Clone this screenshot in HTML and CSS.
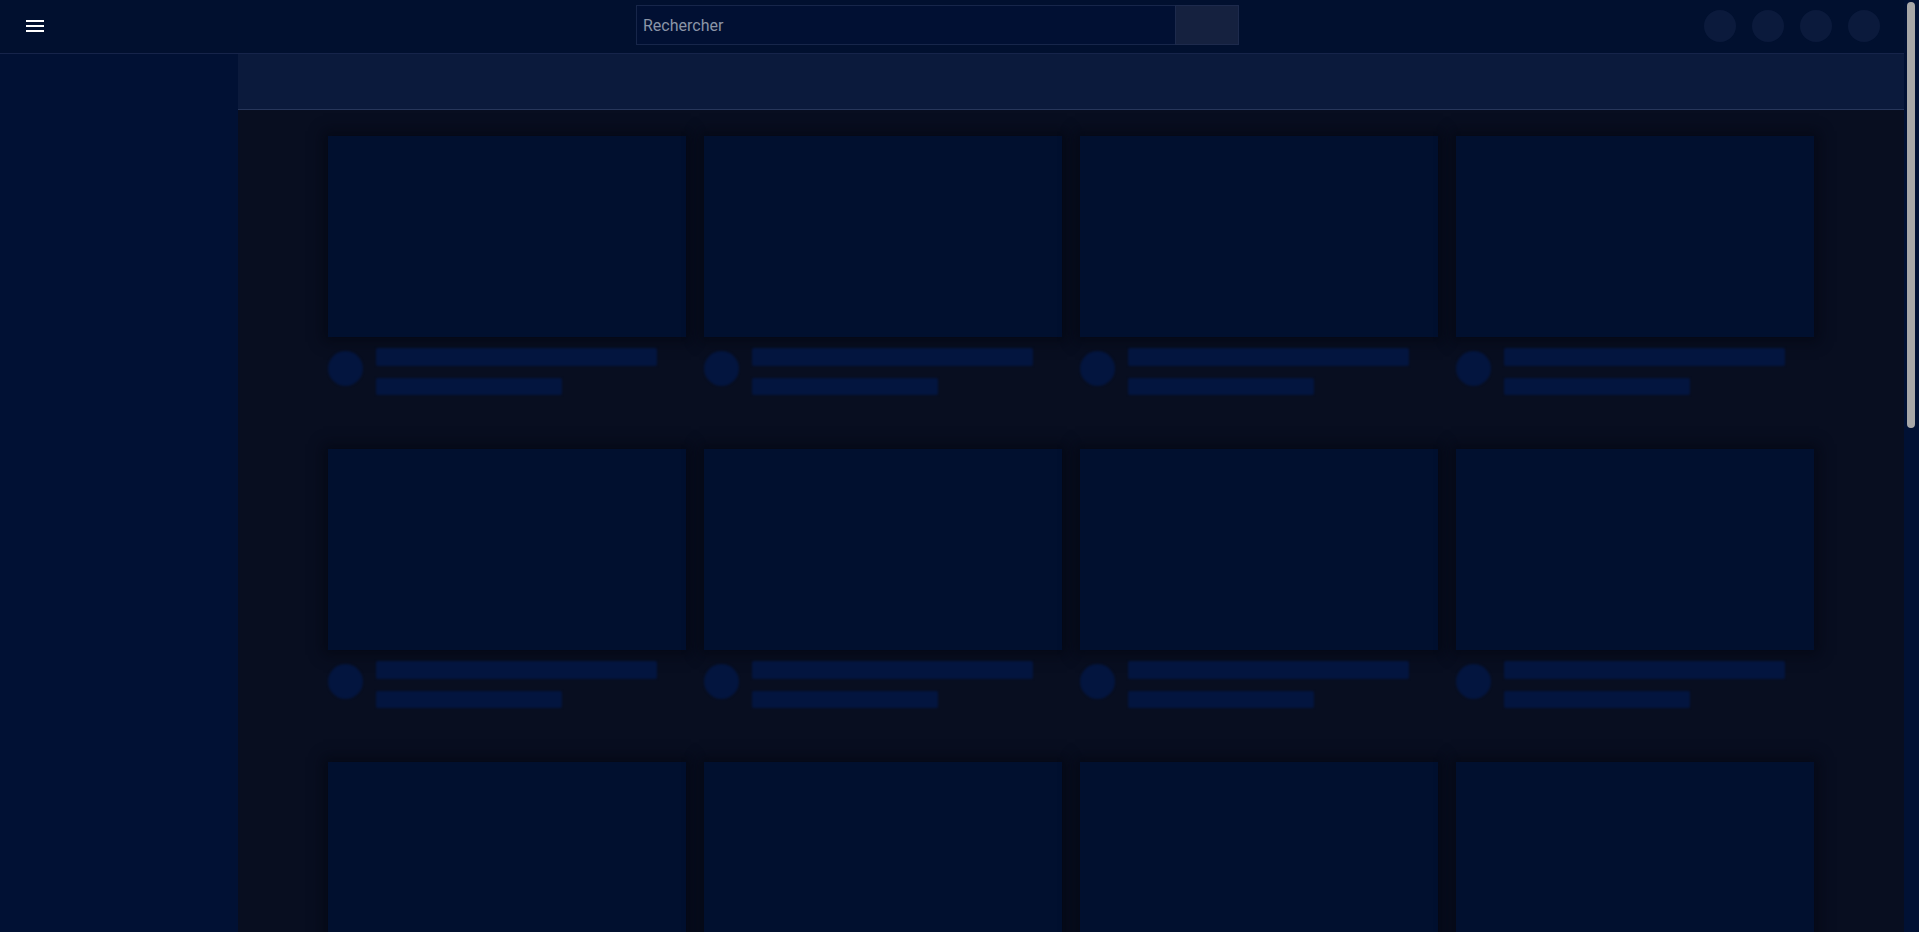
FILE: index.html
```html
<!DOCTYPE html>
<html lang="fr">
<head>
<meta charset="utf-8">
<title>Accueil</title>
<link rel="stylesheet" href="styles.css">
</head>
<body>
<div class="page">
  <div class="app">
    <header class="topbar">
      <button class="menu-btn" aria-label="Menu">
        <svg width="18" height="12" viewBox="0 0 18 12"><rect x="0" y="0" width="18" height="2" fill="#fff"/><rect x="0" y="5" width="18" height="2" fill="#fff"/><rect x="0" y="10" width="18" height="2" fill="#fff"/></svg>
      </button>
      <form class="search">
        <input class="search-input" type="text" placeholder="Rechercher">
        <button class="search-btn" type="button" aria-label="Rechercher"></button>
      </form>
      <div class="actions">
        <span class="dot"></span><span class="dot"></span><span class="dot"></span><span class="dot"></span>
      </div>
    </header>
    <div class="body-row">
      <aside class="sidebar"></aside>
      <main class="main">
        <div class="chips"></div>
        <div class="content">
          <div class="grid">
            <div class="item"><div class="thumb"></div><div class="meta"><span class="avatar"></span><div class="lines"><span class="line l1"></span><span class="line l2"></span></div></div></div>
            <div class="item"><div class="thumb"></div><div class="meta"><span class="avatar"></span><div class="lines"><span class="line l1"></span><span class="line l2"></span></div></div></div>
            <div class="item"><div class="thumb"></div><div class="meta"><span class="avatar"></span><div class="lines"><span class="line l1"></span><span class="line l2"></span></div></div></div>
            <div class="item"><div class="thumb"></div><div class="meta"><span class="avatar"></span><div class="lines"><span class="line l1"></span><span class="line l2"></span></div></div></div>
            <div class="item"><div class="thumb"></div><div class="meta"><span class="avatar"></span><div class="lines"><span class="line l1"></span><span class="line l2"></span></div></div></div>
            <div class="item"><div class="thumb"></div><div class="meta"><span class="avatar"></span><div class="lines"><span class="line l1"></span><span class="line l2"></span></div></div></div>
            <div class="item"><div class="thumb"></div><div class="meta"><span class="avatar"></span><div class="lines"><span class="line l1"></span><span class="line l2"></span></div></div></div>
            <div class="item"><div class="thumb"></div><div class="meta"><span class="avatar"></span><div class="lines"><span class="line l1"></span><span class="line l2"></span></div></div></div>
            <div class="item"><div class="thumb"></div><div class="meta"><span class="avatar"></span><div class="lines"><span class="line l1"></span><span class="line l2"></span></div></div></div>
            <div class="item"><div class="thumb"></div><div class="meta"><span class="avatar"></span><div class="lines"><span class="line l1"></span><span class="line l2"></span></div></div></div>
            <div class="item"><div class="thumb"></div><div class="meta"><span class="avatar"></span><div class="lines"><span class="line l1"></span><span class="line l2"></span></div></div></div>
            <div class="item"><div class="thumb"></div><div class="meta"><span class="avatar"></span><div class="lines"><span class="line l1"></span><span class="line l2"></span></div></div></div>
          </div>
        </div>
      </main>
    </div>
  </div>
  <div class="scrolltrack"><div class="scrollthumb"></div></div>
</div>
</body>
</html>
```
FILE: styles.css
```css
* { box-sizing: border-box; }
html, body { margin: 0; padding: 0; height: 100%; }
body {
  background: #01102f;
  font-family: Roboto, "Liberation Sans", sans-serif;
  overflow: hidden;
}
.page {
  display: flex;
  height: 932px;
}
.app {
  flex: 1;
  display: flex;
  flex-direction: column;
  min-width: 0;
}
.topbar {
  height: 54px;
  flex: none;
  background: #01102f;
  border-bottom: 1px solid #16244a;
  display: flex;
  align-items: center;
  position: relative;
  padding: 0 0 1px 26px;
}
.menu-btn {
  background: none;
  border: 0;
  padding: 0;
  width: 18px;
  height: 12px;
  display: flex;
}
.search {
  position: absolute;
  left: 636px;
  top: 5px;
  display: flex;
  height: 40px;
}
.search-input {
  width: 539px;
  height: 40px;
  background: #011033;
  border: 1px solid #17264a;
  border-right: 0;
  color: #c0c8d6;
  font-family: Roboto, "Liberation Sans", sans-serif;
  font-size: 16px;
  padding: 0 6px;
  outline: none;
}
.search-input::placeholder { color: #8b95a7; }
.search-btn {
  width: 64px;
  height: 40px;
  background: #15213f;
  border: 1px solid #1d2a4c;
  padding: 0;
}
.actions {
  margin-left: auto;
  display: flex;
  gap: 16px;
  padding-right: 24px;
}
.dot {
  width: 32px;
  height: 32px;
  border-radius: 50%;
  background: #0b1a3c;
}
.body-row {
  flex: 1;
  display: flex;
  min-height: 0;
}
.sidebar {
  width: 238px;
  flex: none;
  background: #011134;
}
.main {
  flex: 1;
  display: flex;
  flex-direction: column;
  background: #080e20;
  min-width: 0;
}
.chips {
  height: 56px;
  flex: none;
  background: #0b1a3c;
  border-bottom: 1px solid #27365a;
}
.content {
  flex: 1;
  padding-top: 26px;
  display: flex;
  justify-content: center;
  overflow: hidden;
}
.grid {
  display: grid;
  grid-template-columns: repeat(4, 358px);
  column-gap: 18px;
  row-gap: 54px;
  align-content: start;
}
.thumb {
  height: 201px;
  background: #01102f;
  box-shadow: 0 0 12px 5px rgba(4, 7, 18, 0.7);
}
.meta {
  display: flex;
  gap: 13px;
  padding-top: 11px;
}
.avatar {
  width: 35px;
  height: 35px;
  border-radius: 50%;
  background: #03153f;
  margin-top: 3px;
  flex: none;
  filter: blur(1px);
}
.lines {
  display: flex;
  flex-direction: column;
  gap: 12px;
}
.line {
  display: block;
  background: #03153f;
  border-radius: 2px;
  filter: blur(1px);
}
.l1 { width: 281px; height: 18px; }
.l2 { width: 186px; height: 17px; }
.scrolltrack {
  width: 15px;
  flex: none;
  background: #011134;
  padding: 2px 4px 0 3px;
}
.scrollthumb {
  width: 8px;
  height: 426px;
  border-radius: 4px;
  background: #a8a8a8;
}
```
